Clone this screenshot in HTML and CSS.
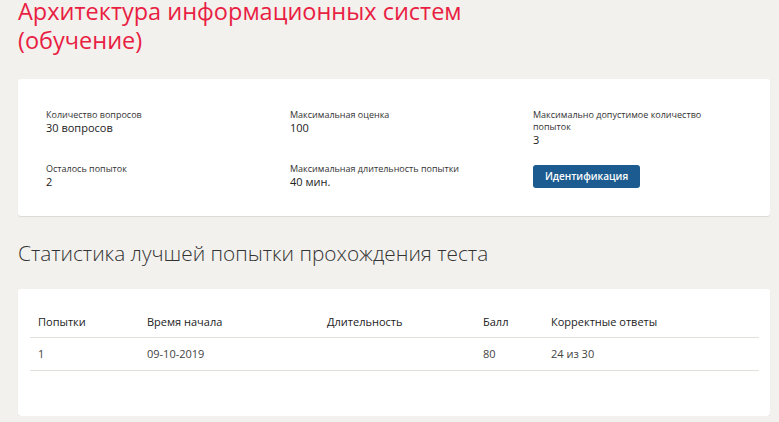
FILE: index.html
```html
<!DOCTYPE html>
<html lang="ru">
<head>
  <meta charset="UTF-8" />
  <meta name="viewport" content="width=device-width, initial-scale=1.0"/>
  <title>Архитектура информационных систем (обучение)</title>
  <link rel="stylesheet" href="styles.css">
</head>
<body>
  <div class="page">
    <h1 class="title">Архитектура информационных систем<br>(обучение)</h1>

    <!-- Test info -->
    <div class="card info-card">
      <div class="info-grid">
        <div class="info-item">
          <div class="info-label">Количество вопросов</div>
          <div class="info-value">30 вопросов</div>
        </div>
        <div class="info-item">
          <div class="info-label">Максимальная оценка</div>
          <div class="info-value">100</div>
        </div>
        <div class="info-item">
          <div class="info-label">Максимально допустимое количество<br>попыток</div>
          <div class="info-value">3</div>
        </div>
        <div class="info-item">
          <div class="info-label">Осталось попыток</div>
          <div class="info-value">2</div>
        </div>
        <div class="info-item">
          <div class="info-label">Максимальная длительность попытки</div>
          <div class="info-value">40 мин.</div>
        </div>
        <div class="info-item">
          <button class="btn-ident">Идентификация</button>
        </div>
      </div>
    </div>

    <h2 class="section-title">Статистика лучшей попытки прохождения теста</h2>

    <!-- Best attempt -->
    <div class="card stats-card">
      <table class="stats-table">
        <colgroup>
          <col style="width:109px">
          <col style="width:180px">
          <col style="width:156px">
          <col style="width:68px">
          <col>
        </colgroup>
        <thead>
          <tr>
            <th>Попытки</th>
            <th>Время начала</th>
            <th>Длительность</th>
            <th>Балл</th>
            <th>Корректные ответы</th>
          </tr>
        </thead>
        <tbody>
          <tr>
            <td>1</td>
            <td>09-10-2019</td>
            <td></td>
            <td>80</td>
            <td>24 из 30</td>
          </tr>
        </tbody>
      </table>
    </div>
  </div>
</body>
</html>
```

FILE: styles.css
```css
* { box-sizing: border-box; }
body {
  margin: 0;
  font-family: 'Open Sans', 'Noto Sans', sans-serif;
  background: #f2f1ee;
  color: #333;
}
.page {
  padding: 0 9px 0 18px;
}
.title {
  margin: -3px 0 0;
  font-size: 23.5px;
  line-height: 29px;
  font-weight: 400;
  color: #e91e43;
}
.card {
  background: #fff;
  border-radius: 3px;
  box-shadow: 0 1px 1px rgba(0,0,0,0.1);
}
.info-card {
  margin-top: 24px;
  padding: 30px 20px 28px 28px;
  height: 137px;
}
.info-grid {
  display: grid;
  grid-template-columns: 244px 243px 1fr;
  row-gap: 17px;
}
.info-label {
  font-size: 9px;
  line-height: 12px;
  color: #333;
}
.info-value {
  font-size: 11px;
  line-height: 13px;
  color: #222;
}
.btn-ident {
  font-family: inherit;
  font-size: 10px;
  font-weight: 600;
  color: #fff;
  background: #1b5b8f;
  border: none;
  border-radius: 3px;
  width: 107px;
  height: 23px;
  padding: 0;
  cursor: pointer;
}
.section-title {
  margin: 0;
  padding: 22px 0 20px;
  font-size: 20.8px;
  line-height: 31px;
  font-weight: 300;
  color: #333;
}
.stats-card {
  padding: 16px 11px 45px 12px;
}
.stats-table {
  width: 100%;
  border-collapse: collapse;
  table-layout: fixed;
  font-size: 11px;
  line-height: 16px;
}
.stats-table th {
  text-align: left;
  font-weight: 400;
  color: #222;
  padding: 9px 8px 7px;
  border-bottom: 1px solid #e2e0db;
}
.stats-table td {
  padding: 8px 8px;
  color: #444;
  border-bottom: 1px solid #e2e0db;
}
```
